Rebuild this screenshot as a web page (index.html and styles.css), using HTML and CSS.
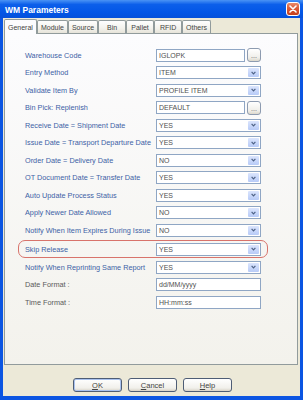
FILE: index.html
```html
<!DOCTYPE html>
<html lang="en">
<head>
    <meta charset="UTF-8">
    <title>WM Parameters</title>
    <link rel="stylesheet" href="styles.css">
</head>
<body>
<div class="window">
    <div class="titlebar">
        <span class="title">WM Parameters</span>
        <span class="close">
            <svg width="8" height="8" viewBox="0 0 8 8"><path d="M1 1 L7 7 M7 1 L1 7" stroke="#fff" stroke-width="1.6" stroke-linecap="round"/></svg>
        </span>
    </div>
    <div class="frame">
        <div class="tabs">
            <span class="tab active">General</span>
            <span class="tab">Module</span>
            <span class="tab">Source</span>
            <span class="tab">Bin</span>
            <span class="tab">Pallet</span>
            <span class="tab">RFID</span>
            <span class="tab">Others</span>
        </div>
        <div class="panel">
            <div class="rows">
                <div class="row">
                    <span class="label">Warehouse Code</span>
                    <div class="picker"><span class="field">IGLOPK</span><span class="browse">...</span></div>
                </div>
                <div class="row">
                    <span class="label">Entry Method</span>
                    <span class="select">ITEM<i class="arrow"><svg width="5" height="4" viewBox="0 0 5 4"><path d="M0.6 0.8 L2.5 2.8 L4.4 0.8" fill="none" stroke="#4d6185" stroke-width="1.2"/></svg></i></span>
                </div>
                <div class="row">
                    <span class="label">Validate Item By</span>
                    <span class="select">PROFILE ITEM<i class="arrow"><svg width="5" height="4" viewBox="0 0 5 4"><path d="M0.6 0.8 L2.5 2.8 L4.4 0.8" fill="none" stroke="#4d6185" stroke-width="1.2"/></svg></i></span>
                </div>
                <div class="row">
                    <span class="label">Bin Pick: Replenish</span>
                    <div class="picker"><span class="field">DEFAULT</span><span class="browse">...</span></div>
                </div>
                <div class="row">
                    <span class="label">Receive Date = Shipment Date</span>
                    <span class="select">YES<i class="arrow"><svg width="5" height="4" viewBox="0 0 5 4"><path d="M0.6 0.8 L2.5 2.8 L4.4 0.8" fill="none" stroke="#4d6185" stroke-width="1.2"/></svg></i></span>
                </div>
                <div class="row">
                    <span class="label">Issue Date = Transport Departure Date</span>
                    <span class="select">YES<i class="arrow"><svg width="5" height="4" viewBox="0 0 5 4"><path d="M0.6 0.8 L2.5 2.8 L4.4 0.8" fill="none" stroke="#4d6185" stroke-width="1.2"/></svg></i></span>
                </div>
                <div class="row">
                    <span class="label">Order Date = Delivery Date</span>
                    <span class="select">NO<i class="arrow"><svg width="5" height="4" viewBox="0 0 5 4"><path d="M0.6 0.8 L2.5 2.8 L4.4 0.8" fill="none" stroke="#4d6185" stroke-width="1.2"/></svg></i></span>
                </div>
                <div class="row">
                    <span class="label">OT Document Date = Transfer Date</span>
                    <span class="select">YES<i class="arrow"><svg width="5" height="4" viewBox="0 0 5 4"><path d="M0.6 0.8 L2.5 2.8 L4.4 0.8" fill="none" stroke="#4d6185" stroke-width="1.2"/></svg></i></span>
                </div>
                <div class="row">
                    <span class="label">Auto Update Process Status</span>
                    <span class="select">YES<i class="arrow"><svg width="5" height="4" viewBox="0 0 5 4"><path d="M0.6 0.8 L2.5 2.8 L4.4 0.8" fill="none" stroke="#4d6185" stroke-width="1.2"/></svg></i></span>
                </div>
                <div class="row">
                    <span class="label">Apply Newer Date Allowed</span>
                    <span class="select">NO<i class="arrow"><svg width="5" height="4" viewBox="0 0 5 4"><path d="M0.6 0.8 L2.5 2.8 L4.4 0.8" fill="none" stroke="#4d6185" stroke-width="1.2"/></svg></i></span>
                </div>
                <div class="row">
                    <span class="label">Notify When Item Expires During Issue</span>
                    <span class="select">NO<i class="arrow"><svg width="5" height="4" viewBox="0 0 5 4"><path d="M0.6 0.8 L2.5 2.8 L4.4 0.8" fill="none" stroke="#4d6185" stroke-width="1.2"/></svg></i></span>
                </div>
                <div class="row marked">
                    <span class="label">Skip Release</span>
                    <span class="select">YES<i class="arrow"><svg width="5" height="4" viewBox="0 0 5 4"><path d="M0.6 0.8 L2.5 2.8 L4.4 0.8" fill="none" stroke="#4d6185" stroke-width="1.2"/></svg></i></span>
                </div>
                <div class="row">
                    <span class="label">Notify When Reprinting Same Report</span>
                    <span class="select">YES<i class="arrow"><svg width="5" height="4" viewBox="0 0 5 4"><path d="M0.6 0.8 L2.5 2.8 L4.4 0.8" fill="none" stroke="#4d6185" stroke-width="1.2"/></svg></i></span>
                </div>
                <div class="row tall">
                    <span class="label plain">Date Format :</span>
                    <span class="field">dd/MM/yyyy</span>
                </div>
                <div class="row tall">
                    <span class="label plain">Time Format :</span>
                    <span class="field">HH:mm:ss</span>
                </div>
            </div>
        </div>
        <div class="buttons">
            <span class="btn default"><u>O</u>K</span>
            <span class="btn"><u>C</u>ancel</span>
            <span class="btn"><u>H</u>elp</span>
        </div>
    </div>
</div>
</body>
</html>
```

FILE: styles.css
```css
/* XP style dialog, scaled down */
body {
    margin: 0;
    font-family: "Liberation Sans", Arial, sans-serif;
    background-color: #0a53e0;
}
.window {
    width: 303px;
    height: 400px;
    display: flex;
    flex-direction: column;
    background-color: #0b55e2;
}
.titlebar {
    height: 18px;
    display: flex;
    align-items: center;
    padding: 0 3px 0 5px;
    background-image: linear-gradient(to bottom, #4a93f5, #0c5fea 25%, #0356e6 70%, #0551da);
}
.title {
    color: #fff;
    font-weight: bold;
    font-size: 8.5px;
    padding-top: 1px;
}
.close {
    margin-left: auto;
    width: 14px;
    height: 14px;
    box-sizing: border-box;
    border: 1px solid #fff;
    border-radius: 3px;
    background-image: linear-gradient(to bottom, #e98b6b, #dc5a36 45%, #c4401d);
    display: flex;
    align-items: center;
    justify-content: center;
}
.frame {
    flex: 1;
    margin: 0 3px 4px;
    background-color: #ece9d8;
    display: flex;
    flex-direction: column;
}
.tabs {
    display: flex;
    align-items: flex-end;
    padding: 1px 0 0 1px;
}
.tab {
    height: 13px;
    min-width: 28px;
    box-sizing: border-box;
    padding: 0 3px;
    border: 1px solid #919b9c;
    border-bottom: none;
    border-radius: 2px 2px 0 0;
    background-image: linear-gradient(to bottom, #fefefe, #f3f2ec 60%, #e6e3d9);
    font-size: 7px;
    color: #444;
    display: flex;
    align-items: center;
    justify-content: center;
}
.tab.active {
    height: 15px;
    margin-bottom: -1px;
    position: relative;
    z-index: 1;
    background: #fcfcfe;
}
.panel {
    flex: 1;
    margin: 0 2px 0 1px;
    border: 1px solid #919b9c;
    background-image: linear-gradient(to bottom, #fcfcfe, #f3f2ec);
}
.rows {
    padding: 12.25px 0 0 20px;
}
.row {
    display: grid;
    grid-template-columns: 131px 105px;
    align-items: center;
    height: 17.5px;
    width: max-content;
}
.row.tall {
    height: 18px;
}
.row.marked {
    position: relative;
    margin: 1.5px 0 0.5px;
}
.row.marked::after {
    content: "";
    position: absolute;
    left: -7px;
    right: -7px;
    top: -0.5px;
    bottom: 0;
    border: 1px solid #d8736b;
    border-radius: 7px;
}
.label {
    font-size: 7.3px;
    color: #4062a6;
    white-space: nowrap;
}
.label.plain {
    color: #5a5a5a;
}
.field {
    height: 13px;
    box-sizing: border-box;
    border: 1px solid #8fa6c4;
    background-color: #fff;
    font-size: 7px;
    line-height: 11px;
    color: #505050;
    padding: 0 2px;
}
.picker {
    display: flex;
    align-items: center;
    gap: 2px;
}
.picker .field {
    flex: 1;
}
.browse {
    width: 14px;
    height: 14px;
    box-sizing: border-box;
    border: 1px solid #8d9bb0;
    border-radius: 3px;
    background-image: linear-gradient(to bottom, #fff, #f0efea 70%, #dcd8cc);
    font-size: 7px;
    line-height: 14px;
    color: #555;
    text-align: center;
}
.select {
    height: 13px;
    box-sizing: border-box;
    border: 1px solid #8fa6c4;
    background-color: #fff;
    padding: 0 1px 0 2px;
    display: flex;
    align-items: center;
    justify-content: space-between;
    font-size: 7px;
    color: #505050;
}
.arrow {
    width: 11px;
    height: 9px;
    border-radius: 1px;
    background-image: linear-gradient(to bottom, #dbe5fd, #b8cbf7);
    display: flex;
    align-items: center;
    justify-content: center;
}
.buttons {
    height: 31px;
    box-sizing: border-box;
    padding: 13px 0 0 2px;
    display: flex;
    justify-content: center;
    gap: 6px;
}
.btn {
    width: 49px;
    height: 14px;
    box-sizing: border-box;
    border: 1px solid #4e5d75;
    border-radius: 3px;
    background-image: linear-gradient(to bottom, #fff, #f1f0eb 75%, #d8d3c7);
    font-size: 7.5px;
    color: #444;
    display: flex;
    align-items: center;
    justify-content: center;
}
.btn.default {
    box-shadow: inset 0 0 0 1px #a9c2ef;
}
```
